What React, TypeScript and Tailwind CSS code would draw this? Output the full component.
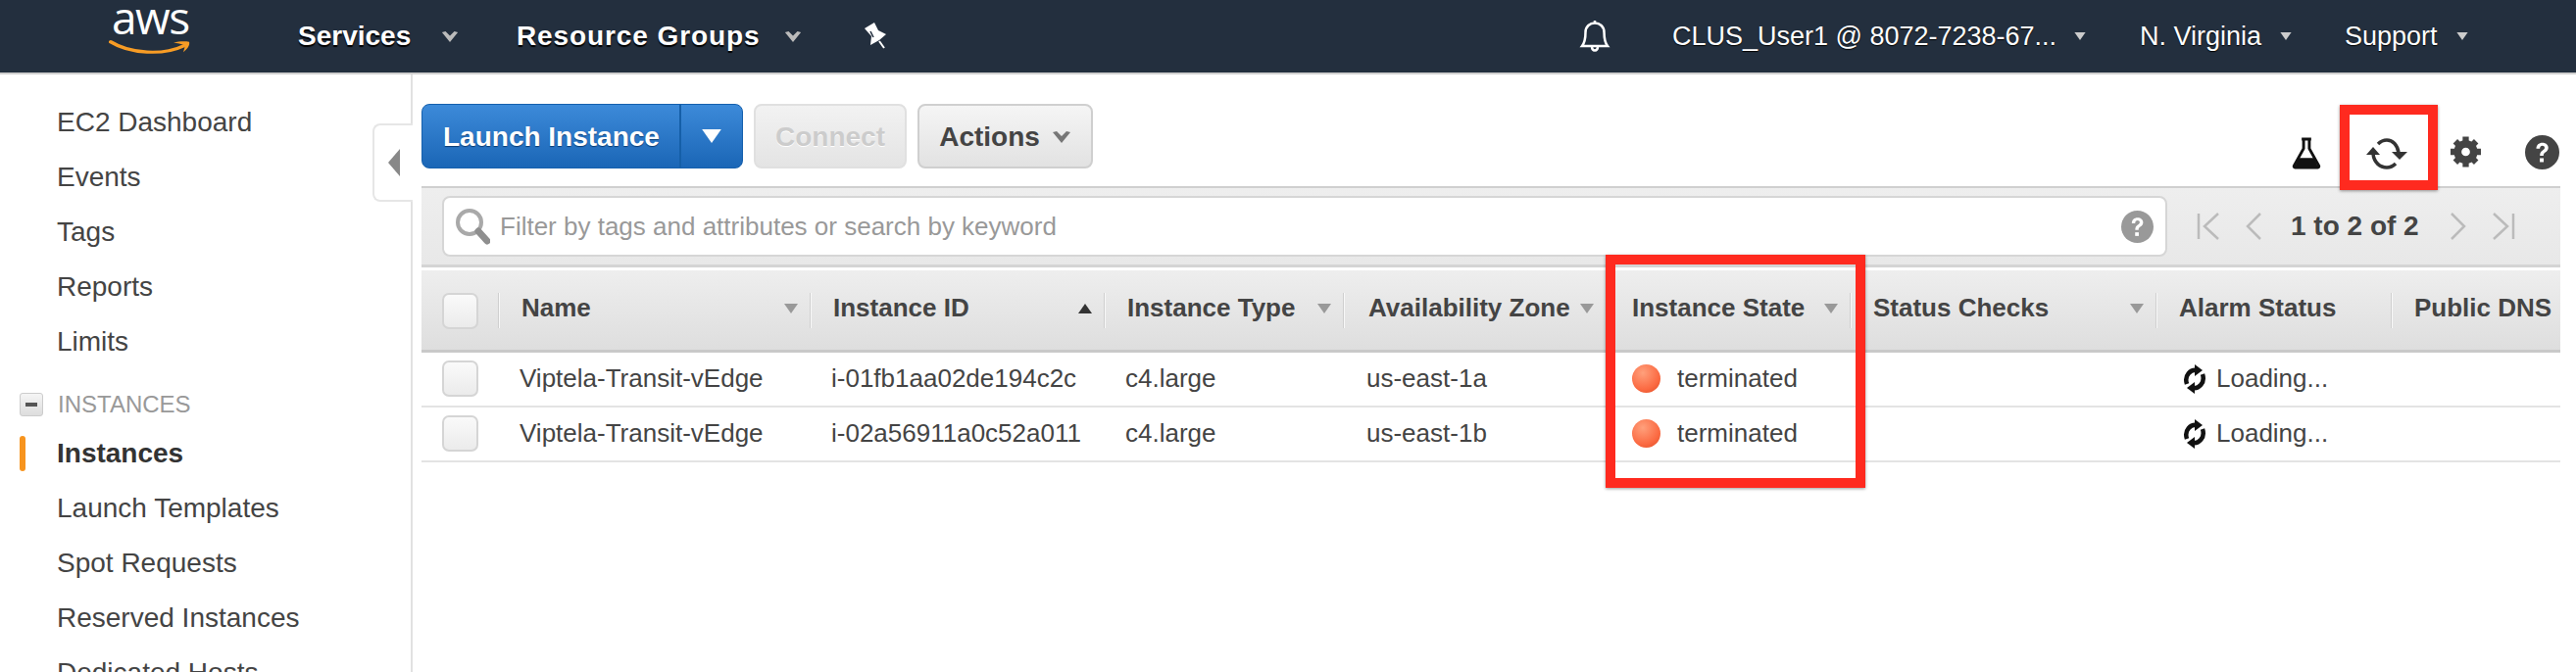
import React from "react";

const font = "font-['Liberation_Sans',Arial,sans-serif]";

function Caret({ className = "" }: { className?: string }) {
  return (
    <svg viewBox="0 0 20 14" className={className}>
      <path d="M1 2 L5 1 L10 6 L15 1 L19 2 L10 13 Z" fill="currentColor" />
    </svg>
  );
}
function Tri({ className = "" }: { className?: string }) {
  return (
    <svg viewBox="0 0 14 10" className={className}>
      <path d="M0 0 H14 L7 10 Z" fill="currentColor" />
    </svg>
  );
}
function TriUp({ className = "" }: { className?: string }) {
  return (
    <svg viewBox="0 0 14 10" className={className}>
      <path d="M0 10 H14 L7 0 Z" fill="currentColor" />
    </svg>
  );
}
function Help({ className = "" }: { className?: string }) {
  return (
    <svg viewBox="0 0 32 32" className={className}>
      <circle cx="16" cy="16" r="16" fill="currentColor" />
      <path d="M10.500 12.500c0-3.400 2.400-5.500 5.700-5.500s5.500 2 5.500 4.700c0 2.200-1.200 3.300-2.800 4.400-1.300.9-1.700 1.500-1.700 3h-3.300c0-2.600.7-3.700 2.500-5 1.200-.9 1.900-1.500 1.900-2.500 0-1.100-.9-1.800-2.100-1.800-1.400 0-2.300 1-2.400 2.700z" fill="#fff" />
      <rect x="13.800" y="21.500" width="3.600" height="3.600" fill="#fff" />
    </svg>
  );
}
function Checkbox() {
  return <div className="w-[37px] h-[37px] rounded-[7px] border-2 border-[#d5d5d5] bg-gradient-to-b from-[#fafafa] to-[#ebebeb]" />;
}
function Sep() {
  return <div className="absolute right-0 top-[23px] h-[36px] w-[2px] bg-[#f8f8f8] border-l border-[#cfcfcf]" />;
}
function HeadCell({ label, x, sort, up }: { label: string; x: string; sort?: boolean; up?: boolean }) {
  return (
    <div className={`relative flex items-center justify-between pr-[14px] pb-[4px] ${x}`}>
      <span className="text-[26px] font-bold text-[#444] whitespace-nowrap">{label}</span>
      {sort && (up ? <TriUp className="w-[14px] h-[10px] text-[#333]" /> : <Tri className="w-[14px] h-[10px] text-[#999]" />)}
      <Sep />
    </div>
  );
}
function Dot() {
  return <div className="w-[29px] h-[29px] rounded-full bg-[radial-gradient(circle_at_38%_30%,#ffa07c,#fb6a42_62%,#dd4a22)]" />;
}
function Loading() {
  return (
    <svg viewBox="0 0 24 30" className="w-[24px] h-[30px] text-[#111]" fill="none" stroke="currentColor" strokeWidth="4.500">
      <path d="M4 20 C1 11 8 5 14 6" />
      <path d="M20 10 C23 19 16 25 10 24" />
      <path d="M12 0 L20 6 L12 12 Z" fill="currentColor" stroke="none" />
      <path d="M12 30 L4 24 L12 18 Z" fill="currentColor" stroke="none" />
    </svg>
  );
}
const cols = "grid grid-cols-[80px_318px_300px_244px_268px_249px_312px_240px_171px]";

function Row({ id, zone }: { id: string; zone: string }) {
  return (
    <div className={`${cols} h-[56px] pb-[1px] items-center border-b-2 border-[#e3e3e3] text-[26px] text-[#444] whitespace-nowrap`}>
      <div className="pl-[21px]"><Checkbox /></div>
      <div className="pl-[20px]">Viptela-Transit-vEdge</div>
      <div className="pl-[20px]">{id}</div>
      <div className="pl-[20px]">c4.large</div>
      <div className="pl-[22px]">{zone}</div>
      <div className="flex items-center gap-[17px] pl-[25px]"><Dot /><span>terminated</span></div>
      <div />
      <div className="flex items-center gap-[10px] pl-[26px]"><Loading /><span>Loading...</span></div>
      <div />
    </div>
  );
}
function Side({ label, active }: { label: string; active?: boolean }) {
  return (
    <div className={`relative h-[56px] flex items-center pl-[58px] text-[28px] whitespace-nowrap ${active ? "font-bold text-[#333]" : "text-[#444]"}`}>
      {active && <div className="absolute left-[20px] top-[10px] h-[36px] w-[6px] rounded-[3px] bg-[#f7941e]" />}
      {label}
    </div>
  );
}

export default function App() {
  return (
    <div className={`${font} relative w-[2628px] h-[686px] overflow-hidden bg-white flex flex-col`}>
      <header className="h-[76px] shrink-0 bg-[#232f3e] border-b-2 border-[#cfcfcf] flex items-center text-white">
        <div className="relative w-[304px] h-full shrink-0">
          <div className="absolute left-[114px] top-[2px] text-[46px] leading-[30px] font-['Open_Sans',sans-serif] tracking-[-1.500px]">aws</div>
          <svg viewBox="0 0 84 26" preserveAspectRatio="none" className="absolute left-[111px] top-[40px] w-[84px] h-[18px]">
            <path d="M2 4 C22 22 56 24 76 10" fill="none" stroke="#f79c25" strokeWidth="4.500" strokeLinecap="round" />
            <path d="M66 5 C72 3 78 3 82 4 C83 9 80 15 76 19 C77 14 78 11 77 9 C74 7 70 6 66 5 Z" fill="#f79c25" />
          </svg>
        </div>
        <span className="text-[28px] font-bold w-[146px] [text-shadow:0_2px_1px_#000]">Services</span>
        <Caret className="w-[18px] h-[13px] text-[#bbb] shrink-0" />
        <span className="ml-[59px] text-[28px] font-bold tracking-[0.9px] w-[273px] whitespace-nowrap [text-shadow:0_2px_1px_#000]">Resource Groups</span>
        <Caret className="w-[18px] h-[13px] text-[#bbb] shrink-0" />
        <svg viewBox="0 0 70 50" className="ml-[42px] w-[70px] h-[50px] shrink-0" fill="#fff">
          <path d="M22 17 L32 11 L36 19 L44 23 L37 29 L28 34 L29 25 Z" />
          <path d="M37 30 L42 37" stroke="#fff" strokeWidth="2" />
          <path d="M28 20 L31 26" stroke="#232f3e" strokeWidth="1.500" />
        </svg>
        <div className="ml-auto flex items-center">
          <svg viewBox="0 0 32 34" className="w-[32px] h-[34px] mr-[63px]" fill="none" stroke="#fff" strokeWidth="2.500">
            <path d="M3 27 H29 C26 23 25.500 19 25.500 13 C25.500 7 21 3.500 16 3.500 C11 3.500 6.500 7 6.500 13 C6.500 19 6 23 3 27 Z" />
            <path d="M13 27 C13 33 19 33 19 27" />
            <path d="M16 1 V4" />
          </svg>
          <span className="text-[27px] whitespace-nowrap w-[410px] [text-shadow:0_1px_1px_#000]">CLUS_User1 @ 8072-7238-67...</span>
          <Tri className="w-[12px] h-[8px] text-[#ccc]" />
          <span className="ml-[55px] text-[27px] w-[143px] whitespace-nowrap [text-shadow:0_1px_1px_#000]">N. Virginia</span>
          <Tri className="w-[12px] h-[8px] text-[#ccc]" />
          <span className="ml-[54px] text-[27px] w-[114px] [text-shadow:0_1px_1px_#000]">Support</span>
          <Tri className="w-[12px] h-[8px] text-[#ccc] mr-[110px]" />
        </div>
      </header>

      <div className="flex flex-1 min-h-0">
        <aside className="relative w-[421px] shrink-0 border-r-2 border-[#e1e1e1] pt-[21px]">
          <Side label="EC2 Dashboard" />
          <Side label="Events" />
          <Side label="Tags" />
          <Side label="Reports" />
          <Side label="Limits" />
          <div className="h-[45px] mt-[13px] flex items-center pl-[20px] gap-[15px] text-[24px] text-[#999]">
            <div className="w-[24px] h-[24px] rounded-[3px] border border-[#ccc] bg-gradient-to-b from-[#f5f5f5] to-[#ddd] flex items-center justify-center">
              <div className="w-[12px] h-[4px] bg-[#555]" />
            </div>
            INSTANCES
          </div>
          <Side label="Instances" active />
          <Side label="Launch Templates" />
          <Side label="Spot Requests" />
          <Side label="Reserved Instances" />
          <Side label="Dedicated Hosts" />
          <div className="absolute right-[-2px] top-[50px] w-[41px] h-[80px] rounded-l-[8px] border-2 border-r-0 border-[#e6e6e6] bg-white flex items-center justify-center">
            <svg viewBox="0 0 12 28" className="w-[12px] h-[28px]"><path d="M12 0 V28 L0 14 Z" fill="#888" /></svg>
          </div>
        </aside>

        <main className="relative flex-1 pl-[9px] pr-[16px]">
          <div className="h-[114px] flex items-start pt-[30px]">
            <div className="flex h-[66px] w-[328px] rounded-[8px] border border-[#1560ad] bg-gradient-to-b from-[#3c8ad9] to-[#1a66b6] text-white">
              <div className="w-[264px] border-r-2 border-[#155fa8] flex items-center pl-[21px] pt-[1px] text-[28px] font-bold [text-shadow:0_1px_1px_#0a3a70] whitespace-nowrap">Launch Instance</div>
              <div className="flex-1 flex items-center justify-center"><Tri className="w-[24px] h-[14px]" /></div>
            </div>
            <div className="ml-[11px] w-[156px] h-[66px] pt-[1px] rounded-[8px] border-2 border-[#e0e0e0] bg-gradient-to-b from-[#f2f2f2] to-[#e4e4e4] flex items-center justify-center text-[28px] font-bold text-[#cccccc] [text-shadow:0_1px_0_#fff]">Connect</div>
            <div className="ml-[11px] w-[179px] h-[66px] pt-[1px] rounded-[8px] border-2 border-[#cfcfcf] bg-gradient-to-b from-[#f5f5f5] to-[#e2e2e2] flex items-center justify-center gap-[12px] text-[28px] font-bold text-[#444]">
              Actions <Caret className="w-[20px] h-[14px] text-[#777]" />
            </div>
            <div className="ml-auto flex items-center h-[36px] mt-[31px] mr-[1px]">
              <svg viewBox="0 0 32 34" className="w-[32px] h-[33px] mt-[2px]">
                <path d="M11 2 H21 M13 3 V12 L3 30 C2.500 31 3 32 4 32 H28 C29 32 29.500 31 29 30 L19 12 V3" fill="none" stroke="#111" strokeWidth="3" />
                <path d="M8 22 H24 L28.500 32 H3.500 Z" fill="#111" />
              </svg>
              <svg viewBox="0 0 42 32" className="ml-[45px] w-[42px] h-[32px] mt-[3px]" fill="none" stroke="#333" strokeWidth="3.500">
                <path d="M12 6 C15 3 18 2 21 2 C27 2 32 7 33 15" />
                <path d="M7 16 C8 25 14 30 21 30 C24 30 27 29 30 26" />
                <path d="M26 14 H42 L34 22 Z" fill="#333" stroke="none" />
                <path d="M0 17 H14 L7 9 Z" fill="#333" stroke="none" />
              </svg>
              <svg viewBox="0 0 32 32" className="ml-[44px] w-[31px] h-[32px]">
                <circle cx="16" cy="16" r="8.500" fill="none" stroke="#444" strokeWidth="8" />
                <g stroke="#444" strokeWidth="6.500">
                  <path d="M16 0 V6 M16 26 V32 M0 16 H6 M26 16 H32 M5 5 L9 9 M23 23 L27 27 M27 5 L23 9 M5 27 L9 23" />
                </g>
              </svg>
              <Help className="ml-[45px] w-[35px] h-[35px] text-[#444]" />
            </div>
          </div>

          <div className="h-[83px] border-t-2 border-[#cfcfcf] border-b-[3px] border-b-[#d4d4d4] bg-gradient-to-b from-[#eeeeee] to-[#e8e8e8] flex pl-[21px] pt-[8px]">
            <div className="w-[1760px] h-[62px] rounded-[8px] border-2 border-[#d6d6d6] bg-white flex items-center pl-[11px] pr-[12px]">
              <svg viewBox="0 0 36 38" className="w-[36px] h-[38px] shrink-0" fill="none">
                <circle cx="15" cy="15" r="12" stroke="#a9a9a9" strokeWidth="4" />
                <path d="M24 24 L33 34" stroke="#8f8f8f" strokeWidth="7" strokeLinecap="round" />
              </svg>
              <span className="ml-[10px] text-[26px] text-[#999] whitespace-nowrap">Filter by tags and attributes or search by keyword</span>
              <Help className="ml-auto w-[33px] h-[33px] text-[#999]" />
            </div>
            <div className="flex items-center h-[62px] pl-[30px] text-[#bbb]">
              <svg viewBox="0 0 24 28" className="w-[24px] h-[28px]" fill="none" stroke="currentColor" strokeWidth="2.500"><path d="M2 1 V27 M22 1 L8 14 L22 27" /></svg>
              <svg viewBox="0 0 16 28" className="ml-[26px] w-[16px] h-[28px]" fill="none" stroke="currentColor" strokeWidth="2.500"><path d="M15 1 L2 14 L15 27" /></svg>
              <span className="ml-[30px] text-[28px] font-bold text-[#444] whitespace-nowrap">1 to 2 of 2</span>
              <svg viewBox="0 0 16 28" className="ml-[32px] w-[16px] h-[28px]" fill="none" stroke="currentColor" strokeWidth="2.500"><path d="M1 1 L14 14 L1 27" /></svg>
              <svg viewBox="0 0 24 28" className="ml-[26px] w-[24px] h-[28px]" fill="none" stroke="currentColor" strokeWidth="2.500"><path d="M22 1 V27 M2 1 L16 14 L2 27" /></svg>
            </div>
          </div>

          <div className={`${cols} mt-[3px] h-[84px] bg-gradient-to-b from-[#eeeeee] to-[#dedede] border-b-[3px] border-[#c9c9c9]`}>
            <div className="relative pl-[21px] pt-[23px]"><Checkbox /><Sep /></div>
            <HeadCell label="Name" x="pl-[22px]" sort />
            <HeadCell label="Instance ID" x="pl-[22px]" sort up />
            <HeadCell label="Instance Type" x="pl-[22px]" sort />
            <HeadCell label="Availability Zone" x="pl-[24px]" sort />
            <HeadCell label="Instance State" x="pl-[25px]" sort />
            <HeadCell label="Status Checks" x="pl-[22px]" sort />
            <HeadCell label="Alarm Status" x="pl-[22px]" />
            <div className="flex items-center pl-[22px] pb-[4px] text-[26px] font-bold text-[#444] whitespace-nowrap">Public DNS</div>
          </div>
          <Row id="i-01fb1aa02de194c2c" zone="us-east-1a" />
          <Row id="i-02a56911a0c52a011" zone="us-east-1b" />
        </main>
      </div>

      <div className="absolute left-[1638px] top-[260px] w-[265px] h-[238px] border-[10px] border-[#ff2a1f] shadow-[0_1px_3px_rgba(0,0,0,0.4)]" />
      <div className="absolute left-[2387px] top-[107px] w-[100px] h-[87px] border-[10px] border-[#ff2a1f] shadow-[0_1px_3px_rgba(0,0,0,0.4)]" />
    </div>
  );
}
